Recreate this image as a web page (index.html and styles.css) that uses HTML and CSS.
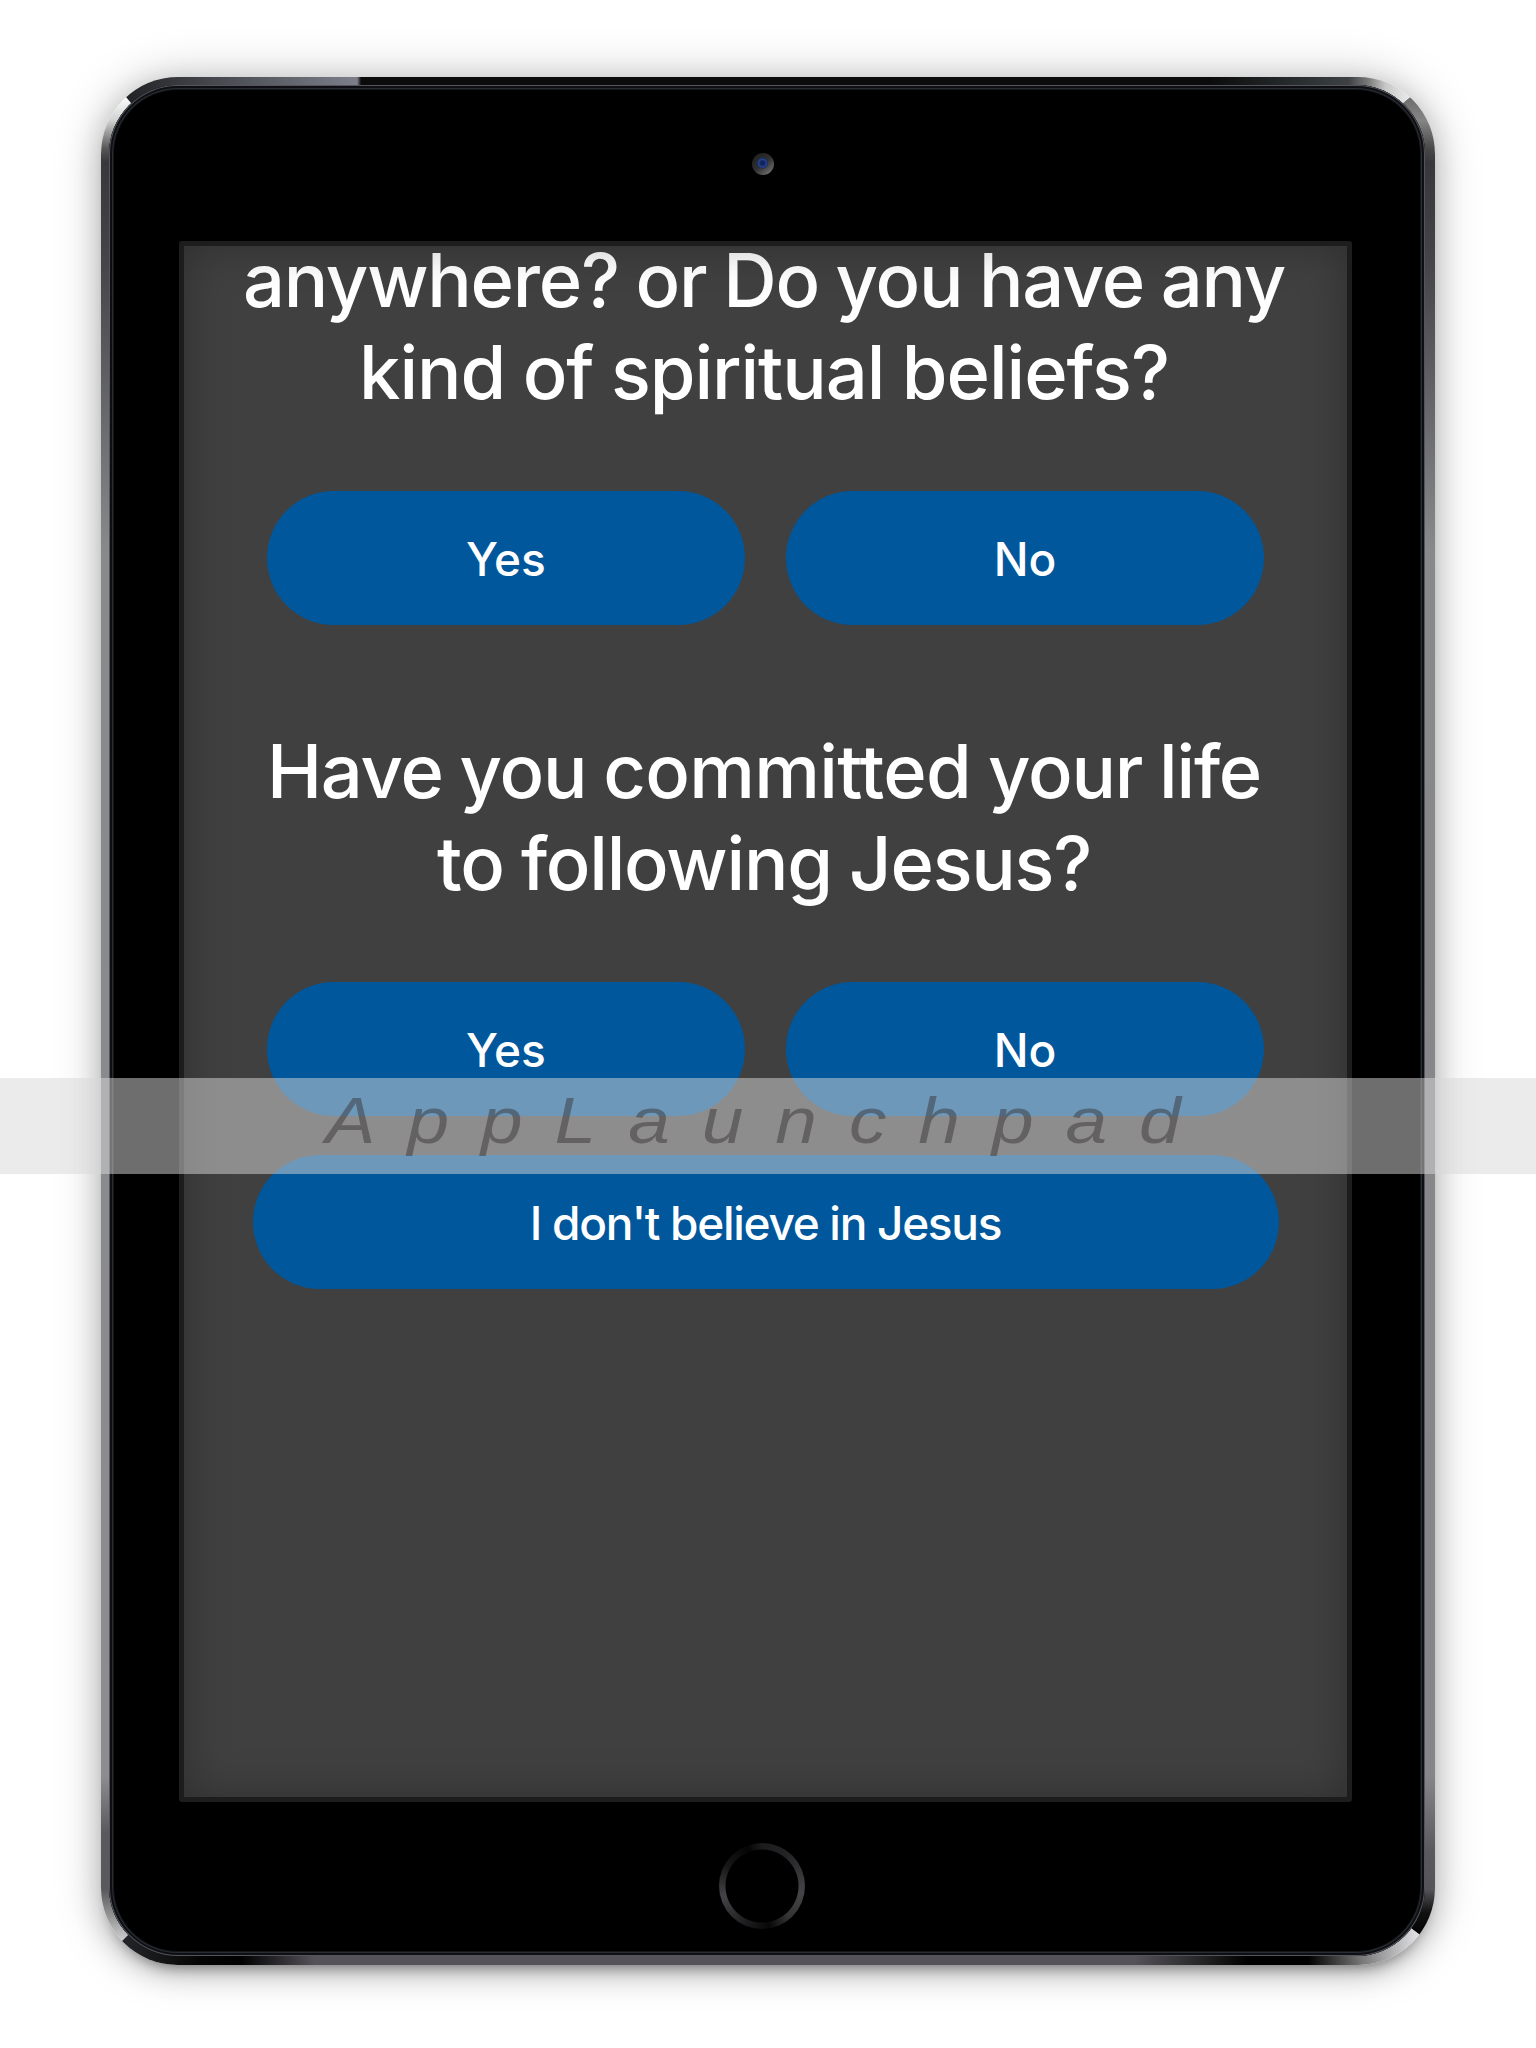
FILE: index.html
```
<!DOCTYPE html>
<html lang="en">
<head>
<meta charset="utf-8">
<title>AppLaunchpad</title>
<link rel="stylesheet" href="styles.css">
</head>
<body>
<main class="stage">
  <div class="device">
    <svg class="rim" viewBox="0 0 1334 1888" aria-hidden="true">
      <defs>
        <clipPath id="body"><rect width="1334" height="1888" rx="77"/></clipPath>
        <linearGradient id="top" gradientUnits="userSpaceOnUse" x1="0" y1="0" x2="1334" y2="0">
          <stop offset=".02" stop-color="#222326"/><stop offset=".06" stop-color="#3a3b40"/><stop offset=".192" stop-color="#7c7f8a"/><stop offset=".195" stop-color="#0b0b0b"/><stop offset=".83" stop-color="#0b0b0b"/><stop offset=".9" stop-color="#2a2f31"/><stop offset=".935" stop-color="#3d4144"/><stop offset=".95" stop-color="#7a7a7a"/><stop offset=".963" stop-color="#c8c8c8"/><stop offset=".98" stop-color="#e8e8e8"/>
        </linearGradient>
        <linearGradient id="bottom" gradientUnits="userSpaceOnUse" x1="0" y1="0" x2="1334" y2="0">
          <stop offset=".02" stop-color="#222326"/><stop offset=".075" stop-color="#050505"/><stop offset=".105" stop-color="#000"/><stop offset=".16" stop-color="#55525a"/><stop offset=".774" stop-color="#55525a"/><stop offset=".82" stop-color="#2a2a2c"/><stop offset=".86" stop-color="#000"/><stop offset=".905" stop-color="#000"/><stop offset=".945" stop-color="#777"/><stop offset=".985" stop-color="#dcdce0"/>
        </linearGradient>
        <linearGradient id="left" gradientUnits="userSpaceOnUse" x1="0" y1="0" x2="0" y2="1888">
          <stop offset=".012" stop-color="#f6f7f7"/><stop offset=".023" stop-color="#d0d1d1"/><stop offset=".038" stop-color="#565656"/><stop offset=".045" stop-color="#38373b"/><stop offset=".1" stop-color="#45454a"/><stop offset=".25" stop-color="#88898b"/><stop offset=".9" stop-color="#8c8c91"/><stop offset=".93" stop-color="#5a595e"/><stop offset=".96" stop-color="#59585d"/><stop offset=".975" stop-color="#999"/><stop offset=".986" stop-color="#c8c8cb"/>
        </linearGradient>
        <linearGradient id="right" gradientUnits="userSpaceOnUse" x1="0" y1="0" x2="0" y2="1888">
          <stop offset=".012" stop-color="#707070"/><stop offset=".023" stop-color="#858585"/><stop offset=".038" stop-color="#484848"/><stop offset=".045" stop-color="#38373b"/><stop offset=".1" stop-color="#45454a"/><stop offset=".25" stop-color="#88898b"/><stop offset=".9" stop-color="#86858a"/><stop offset=".94" stop-color="#5a595e"/><stop offset=".96" stop-color="#555458"/><stop offset=".972" stop-color="#111"/><stop offset=".986" stop-color="#000"/>
        </linearGradient>
      </defs>
      <g clip-path="url(#body)">
        <path fill="url(#left)" d="M0-5 25 20 30 26 300 300V1600L26 1859 21 1864 0 1885Z"/>
        <path fill="url(#right)" d="M1334-5 1309 20 1303 25 1034 300V1600L1311 1852 1319 1858 1334 1870Z"/>
        <path fill="url(#top)" d="M0-5 25 20 30 26 300 300H1034L1303 25 1309 20 1334-5Z"/>
        <path fill="url(#bottom)" d="M0 1888V1885L21 1864 26 1859 300 1600H1034L1311 1852 1319 1858 1334 1870V1888Z"/>
      </g>
    </svg>
    <div class="glass">
      <div class="camera"></div>
      <section class="screen">
        <h2 class="question"><span class="line q1">anywhere? or Do you have any</span><span class="line q2">kind of spiritual beliefs?</span></h2>
        <div class="answers"><button class="pill">Yes</button><button class="pill">No</button></div>
        <h2 class="question"><span class="line q3">Have you <span class="loose">committed</span> your life</span><span class="line q4">to following Jesus?</span></h2>
        <div class="answers"><button class="pill">Yes</button><button class="pill">No</button></div>
        <button class="pill wide">I don't believe in Jesus</button>
      </section>
      <div class="home"></div>
    </div>
  </div>
  <div class="watermark"><span class="brand">AppLaunchpad</span></div>
</main>
</body>
</html>
```
FILE: styles.css
```
* { box-sizing: border-box; }
body { margin: 0; background: #fff; font-family: Inter, "Liberation Sans", sans-serif; }
.stage { position: relative; width: 1536px; height: 2048px; padding: 77px 101px 83px; }

/* Tablet body */
.device {
  position: relative;
  width: 1334px;
  height: 1888px;
  padding: 8px 10px 9px 8px;
  border-radius: 77px;
  box-shadow: 0 0 48px rgba(0,0,0,.22), 0 8px 28px rgba(0,0,0,.18), 0 12px 14px -10px rgba(0,0,0,.4);
}
.rim { position: absolute; inset: 0; width: 100%; height: 100%; }
.glass {
  position: relative;
  height: 100%;
  border-radius: 69px;
  background: #000;
  display: flex;
  flex-direction: column;
  align-items: center;
  box-shadow: inset 0 0 0 1px #55545b, inset 0 0 0 3px #0d0f14, inset 0 0 0 4px #292c31, inset 0 0 0 5px #14161a;
}
.camera {
  width: 22px;
  height: 22px;
  margin: 68px 8px 66px 0;
  border-radius: 50%;
  background:
    radial-gradient(circle at 48% 46%, #12245c 0 2px, #27458f 4px, #1c2d60 5px, transparent 6px),
    linear-gradient(140deg, #222 15%, #303030 50%, #777 95%);
}
.home {
  width: 86px;
  height: 86px;
  margin: 41px 10px 0 0;
  border-radius: 50%;
  background:
    radial-gradient(circle, #000 36px, transparent 37px),
    conic-gradient(#1c1c1e, #242426 40deg, #454448 100deg, #333 140deg, #080809 170deg, #1a1a1c 200deg, #444347 255deg, #161617 300deg, #050505 340deg, #1c1c1e);
}

/* App content */
.screen {
  position: relative;
  flex: none;
  width: 1173px;
  height: 1561px;
  margin-right: 3px;
  border: 5px solid #1d1d1d;
  border-radius: 3px;
  background: #404040;
  display: flex;
  flex-direction: column;
  align-items: center;
}
.screen::after { content: ""; position: absolute; inset: 0; box-shadow: inset 0 0 45px rgba(0,0,0,.28); }
.question {
  flex: none;
  height: 257px;
  margin: -12px 3px 0 0;
  color: #fff;
  text-align: center;
  font-size: 74px;
  font-weight: 500;
  line-height: 92.4px;
  letter-spacing: -1.22px;
  white-space: nowrap;
}
.line { display: block; }
.q1 { word-spacing: -1.8px; }
.q2 { letter-spacing: -1.04px; word-spacing: -1.2px; }
.q3 { word-spacing: -1.6px; }
.q4 { word-spacing: -1.3px; }
.loose { letter-spacing: -.7px; }
.answers { display: flex; flex: none; gap: 41px; height: 134px; margin-bottom: 112px; }
.pill {
  flex: none;
  width: 478px;
  height: 133.5px;
  padding: 2px 0 0;
  border: 0;
  border-radius: 67px;
  background: #00579c;
  color: #fff;
  font: 500 46px Inter, "Liberation Sans", sans-serif;
}
.wide { width: 1026px; margin-top: -73px; letter-spacing: -1.3px; }

/* Band across the whole stage */
.watermark {
  position: absolute;
  left: 0;
  right: 0;
  top: 1078px;
  height: 96px;
  padding-left: 3px;
  background: rgba(216,216,216,.51);
  display: flex;
  justify-content: center;
}
.brand {
  font: italic 64px/86px "Liberation Sans", sans-serif;
  color: rgba(48,44,44,.45);
  letter-spacing: 27.3px;
  transform: scaleX(1.17);
}
```
